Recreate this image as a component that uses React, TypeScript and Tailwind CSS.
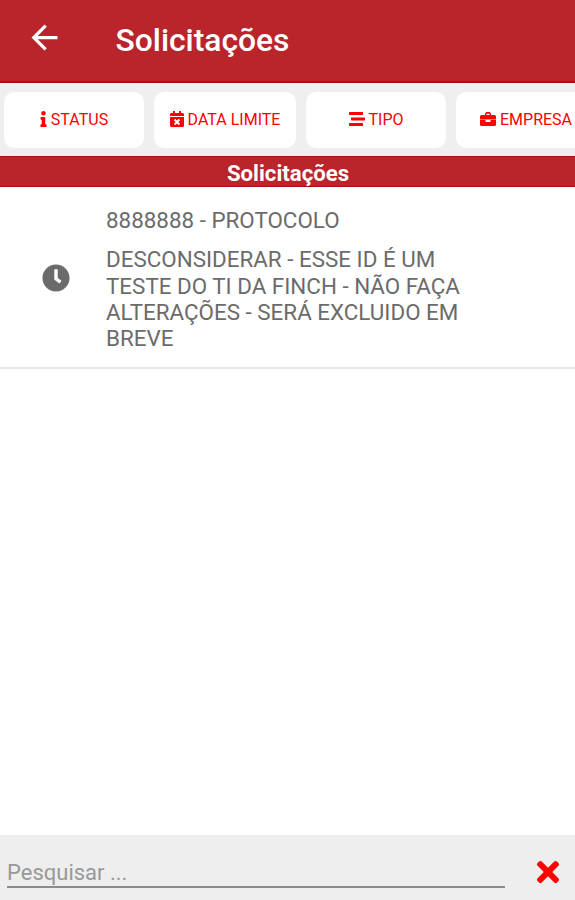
import React from "react"
import { FaCalendarTimes, FaClock, FaInfo, FaStream, FaTimes } from "react-icons/fa"
import { MdArrowBack } from "react-icons/md"

interface FilterButtonProps {
  icon: React.ReactNode
  label: string
  className: string
}

const BriefcaseIcon: React.FC = () => (
  <svg viewBox="0 0 16 16" className="size-4" fill="currentColor" aria-hidden="true">
    <path
      fillRule="evenodd"
      d="M5 4V2.5L6.2 1h3.6L11 2.5V4h3.5A1.5 1.5 0 0 1 16 5.500V8.600H0V5.500A1.500 1.500 0 0 1 1.500 4ZM6.400 4h3.200V2.700H6.400Z"
    />
    <path d="M0 9h5.500v1.300c0 .4.300.7.700.7h3.600c.4 0 .7-.3.700-.7V9H16v4.500a1.500 1.500 0 0 1-1.500 1.500h-13A1.500 1.500 0 0 1 0 13.500Z" />
  </svg>
)

const FilterButton: React.FC<FilterButtonProps> = ({ icon, label, className }) => (
  <button
    className={`flex h-14 shrink-0 items-center justify-center rounded-[10px] bg-white pb-px text-[16px] text-[#ff0000] ${className}`}
  >
    {icon}
    <span className="pt-[2px] whitespace-nowrap">{label}</span>
  </button>
)

export default function App() {
  return (
    <div className="flex h-[900px] w-[575px] flex-col overflow-hidden bg-white font-['Roboto',sans-serif]">
      <header className="flex h-[83px] shrink-0 items-center border-b-2 border-[#a90e16] bg-[#b9252b] text-white">
        <button className="mb-[6px] ml-[25px]" aria-label="Voltar">
          <MdArrowBack className="size-[39px]" />
        </button>
        <h1 className="-mt-px ml-[51.5px] text-[31.8px] leading-10 font-medium">Solicitações</h1>
      </header>

      <div className="flex h-[73px] shrink-0 items-center overflow-hidden bg-[#efefef] pl-1">
        <FilterButton
          className="w-[140px] gap-1"
          icon={<FaInfo className="h-4 w-[7px]" />}
          label="STATUS"
        />
        <FilterButton
          className="ml-[10px] w-[142px] gap-1"
          icon={<FaCalendarTimes className="h-4 w-[14px]" />}
          label="DATA LIMITE"
        />
        <FilterButton
          className="ml-[10px] w-[140px] gap-1"
          icon={<FaStream className="size-4" />}
          label="TIPO"
        />
        <FilterButton
          className="ml-[10px] w-[140px] gap-1"
          icon={<BriefcaseIcon />}
          label="EMPRESA"
        />
      </div>

      <h2 className="h-[31px] shrink-0 border-y border-[#a90e16] bg-[#b9252b] pl-px text-center text-[22.2px] leading-[33px] font-bold text-white">
        Solicitações
      </h2>

      <main className="flex-1">
        <div className="flex h-[182px] items-center border-b-2 border-[#e6e6e6] text-[22.4px] text-[#6b6b6b]">
          <FaClock className="mt-px ml-[42px] size-7 shrink-0" />
          <div className="ml-9 w-[370px] pt-[4px] leading-[26.3px]">
            <p className="mb-[13.4px]">8888888 - PROTOCOLO</p>
            <p>
              DESCONSIDERAR - ESSE ID É UM TESTE DO TI DA FINCH - NÃO FAÇA ALTERAÇÕES - SERÁ EXCLUIDO EM BREVE
            </p>
          </div>
        </div>
      </main>

      <footer className="flex h-[65px] shrink-0 items-start bg-[#eeeeee] pt-[22px]">
        <input
          className="ml-[7px] h-[31px] w-[498px] border-b-2 border-[#8c8c8c] bg-transparent pt-px text-[22px] outline-none placeholder:text-[#999999]"
          placeholder="Pesquisar ..."
        />
        <button className="-mt-px ml-[27px]" aria-label="Limpar">
          <FaTimes className="size-8 text-[#ff0000]" />
        </button>
      </footer>
    </div>
  )
}
